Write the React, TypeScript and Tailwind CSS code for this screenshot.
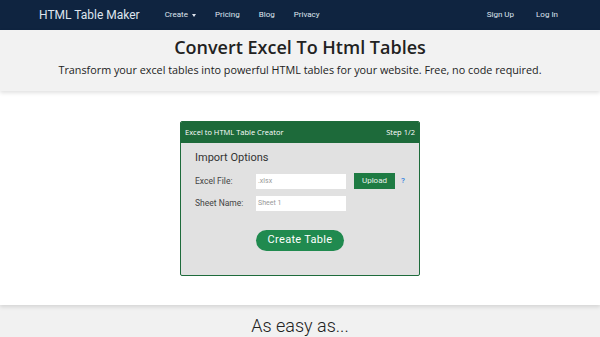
export default function App() {
  return (
    <div className="min-h-screen bg-[#f1f1f1] font-['Roboto',sans-serif] text-[#333]">
      {/* navbar */}
      <nav className="flex h-[30px] items-center bg-[#0f2440] pl-[39px] pr-[42px] text-[#dfe5ee]">
        <span className="text-[12px] leading-none">HTML Table Maker</span>
        <div className="ml-[25px] flex items-center gap-[19px] text-[8px]">
          <span className="flex items-center gap-[4px]">
            Create
            <span className="inline-block h-0 w-0 border-x-[2.5px] border-t-[3px] border-x-transparent border-t-[#dfe5ee]" />
          </span>
          <span>Pricing</span>
          <span>Blog</span>
          <span>Privacy</span>
        </div>
        <div className="ml-auto flex items-center gap-[22px] text-[8px]">
          <span>Sign Up</span>
          <span>Log In</span>
        </div>
      </nav>

      {/* hero */}
      <header className="relative z-10 flex h-[61px] flex-col items-center bg-[#f2f2f2] pt-[5px] shadow-[0_2px_4px_rgba(0,0,0,0.12)]">
        <h1 className="font-['Open_Sans',sans-serif] text-[18px] font-semibold leading-[24px] text-[#222]">
          Convert Excel To Html Tables
        </h1>
        <p className="mt-[4px] font-['Open_Sans',sans-serif] text-[10.8px] leading-[14px] text-[#222]">
          Transform your excel tables into powerful HTML tables for your website. Free, no code required.
        </p>
      </header>

      {/* creator */}
      <section className="relative flex h-[214px] justify-center bg-white pt-[30px] shadow-[0_2px_4px_rgba(0,0,0,0.12)]">
        <div className="h-[155px] w-[240px] overflow-hidden rounded-[2px] border border-[#1e6b3b] bg-[#e1e1e1]">
          <div className="flex h-[21px] items-center justify-between bg-[#1d6a3a] px-[4px] font-['Open_Sans',sans-serif] text-[7.5px] text-white">
            <span>Excel to HTML Table Creator</span>
            <span>Step 1/2</span>
          </div>
          <div className="px-[14px] pt-[8px]">
            <div className="text-[11px] leading-[14px] text-[#333]">Import Options</div>
            <div className="mt-[8px] flex items-center">
              <span className="w-[61px] text-[8.5px] text-[#444]">Excel File:</span>
              <div className="flex h-[15px] w-[90px] items-center bg-white px-[2px] text-[7px] text-[#999]">.xlsx</div>
              <div className="ml-[8px] flex h-[16px] w-[41px] items-center justify-center bg-[#1e7b43] text-[8px] text-[#e8f3ec]">
                Upload
              </div>
              <span className="ml-[6px] text-[8px] font-medium text-[#2f7fe0]">?</span>
            </div>
            <div className="mt-[7px] flex items-center">
              <span className="w-[61px] text-[8.5px] text-[#444]">Sheet Name:</span>
              <div className="flex h-[15px] w-[90px] items-center bg-white px-[2px] text-[7px] text-[#999]">Sheet 1</div>
            </div>
            <div className="mt-[19px] flex pl-[61px]">
              <div className="flex h-[21px] w-[88px] items-center justify-center rounded-full bg-[#208a4f] text-[11px] tracking-[0.3px] text-white">
                Create Table
              </div>
            </div>
          </div>
        </div>
      </section>

      {/* as easy as */}
      <section className="flex justify-center pt-[9px]">
        <h2 className="text-[18px] font-light leading-[24px] text-[#222]">As easy as...</h2>
      </section>
    </div>
  );
}
